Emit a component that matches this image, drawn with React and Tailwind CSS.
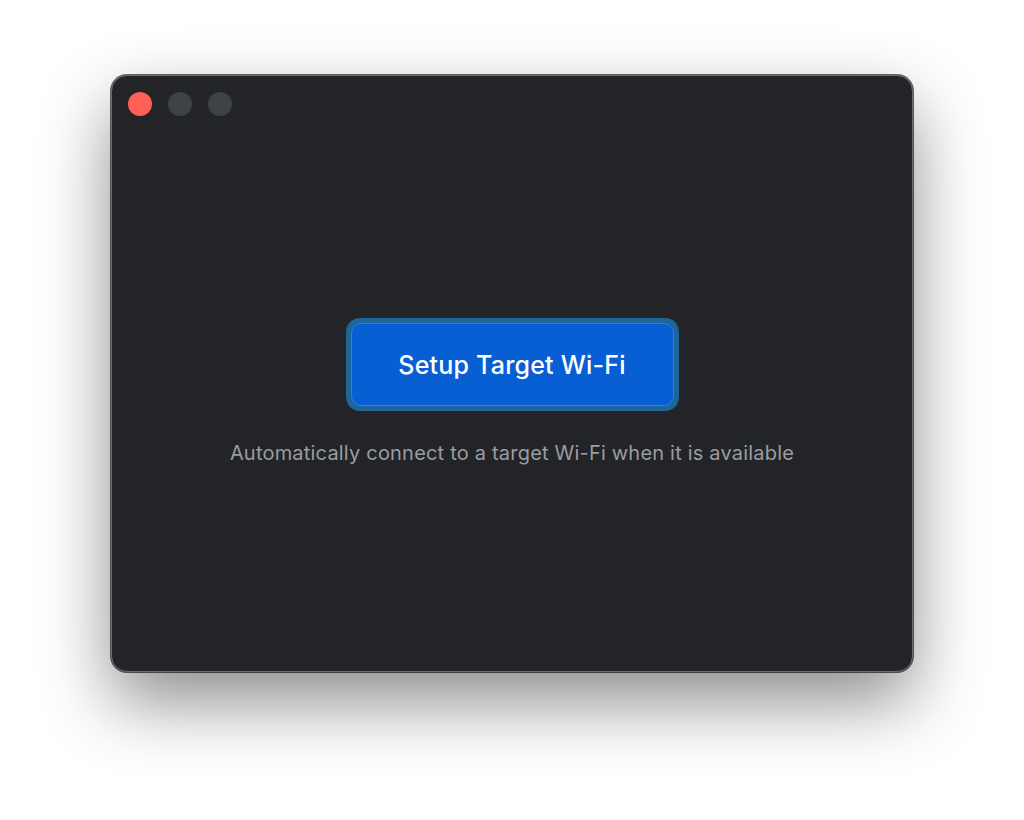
export default function App() {
  return (
    <div
      className="min-h-[820px] w-full bg-white pl-[111px] pt-[75px]"
      style={{ fontFamily: 'Inter, "Noto Sans", sans-serif' }}
    >
      <div className="relative flex h-[597px] w-[802px] flex-col rounded-[16px] border border-[#6e6e70] bg-[#222428] shadow-[0_30px_70px_rgba(0,0,0,0.45),0_0_0_1px_rgba(0,0,0,0.6)]">
        <div className="flex items-center gap-4 pl-[16px] pt-[16px]">
          <span className="h-6 w-6 rounded-full bg-[#fe5f57]" />
          <span className="h-6 w-6 rounded-full bg-[#3f4246]" />
          <span className="h-6 w-6 rounded-full bg-[#3f4246]" />
        </div>

        <div className="flex flex-col items-center pt-[202px]">
          <div className="rounded-[14px] bg-[#1f6598] p-[5px]">
            <button
              type="button"
              className="flex h-[83px] w-[323px] items-center justify-center rounded-[10px] border border-[#2b7fe3] bg-[#085fd3] pt-[3px] text-[25px] font-medium tracking-[0.2px] text-white"
            >
              Setup Target Wi-Fi
            </button>
          </div>
          <p className="mt-[30px] text-[20px] leading-[24px] tracking-[0.2px] text-[#9b9ca0]">
            Automatically connect to a target Wi-Fi when it is available
          </p>
        </div>
      </div>
    </div>
  )
}
